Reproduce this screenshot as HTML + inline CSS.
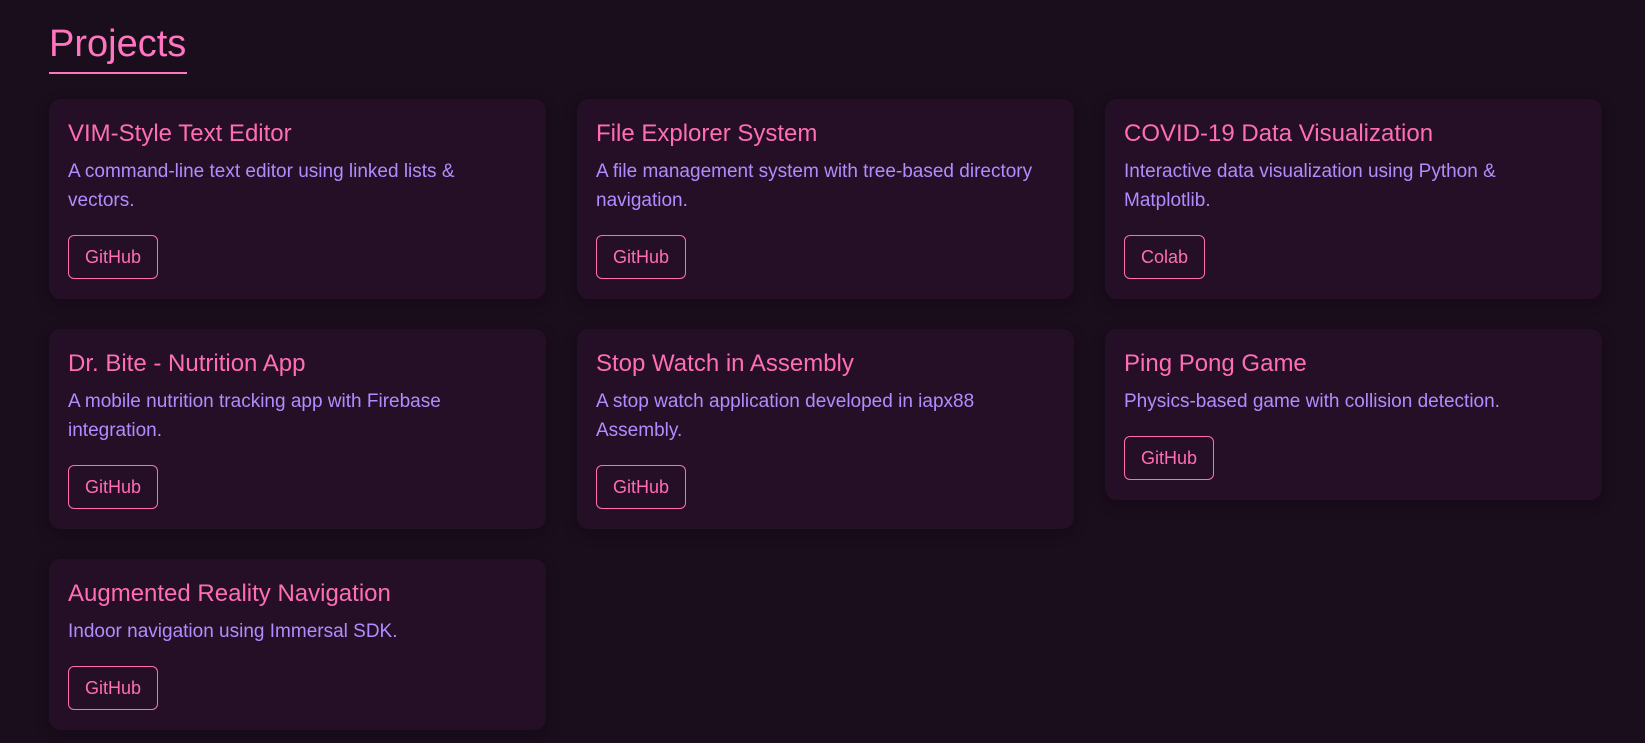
<!DOCTYPE html>
<html><head><meta charset="utf-8"><style>
*{box-sizing:border-box;margin:0;padding:0}
html,body{width:1645px;height:743px;overflow:hidden;background:#1a0d1c;font-family:"Liberation Sans",sans-serif}
h2{position:absolute;left:49px;top:21px;font-size:38px;font-weight:normal;color:#ff75c0;line-height:46px;padding-bottom:5px;border-bottom:2px solid #ff75c0;width:138px;white-space:nowrap}
.grid{position:absolute;left:49px;top:99px;width:1554px;display:grid;grid-template-columns:497px 497px 497px;column-gap:31px;row-gap:30px;align-items:start}
.card{background:#240f26;border-radius:12px;padding:19px 19px 20px;box-shadow:0 4px 14px rgba(0,0,0,.25)}
.t{color:#ff6eb4;font-size:24px;line-height:32px}
.d{color:#b28cff;font-size:19px;line-height:29px;margin-top:7px}
.b{display:inline-block;margin-top:20px;height:44px;border:1px solid #ff6eb4;border-radius:6px;color:#ff6eb4;font-size:18px;line-height:42px;padding:0 16px}
</style></head><body>
<h2>Projects</h2>
<div class="grid">
<div class="card"><div class="t">VIM-Style Text Editor</div><div class="d">A command-line text editor using linked lists &amp;<br>vectors.</div><span class="b">GitHub</span></div>
<div class="card"><div class="t">File Explorer System</div><div class="d">A file management system with tree-based directory<br>navigation.</div><span class="b">GitHub</span></div>
<div class="card"><div class="t">COVID-19 Data Visualization</div><div class="d">Interactive data visualization using Python &amp;<br>Matplotlib.</div><span class="b">Colab</span></div>
<div class="card"><div class="t">Dr. Bite - Nutrition App</div><div class="d">A mobile nutrition tracking app with Firebase<br>integration.</div><span class="b">GitHub</span></div>
<div class="card"><div class="t">Stop Watch in Assembly</div><div class="d">A stop watch application developed in iapx88<br>Assembly.</div><span class="b">GitHub</span></div>
<div class="card"><div class="t">Ping Pong Game</div><div class="d">Physics-based game with collision detection.</div><span class="b">GitHub</span></div>
<div class="card"><div class="t">Augmented Reality Navigation</div><div class="d">Indoor navigation using Immersal SDK.</div><span class="b">GitHub</span></div>
</div>
</body></html>
